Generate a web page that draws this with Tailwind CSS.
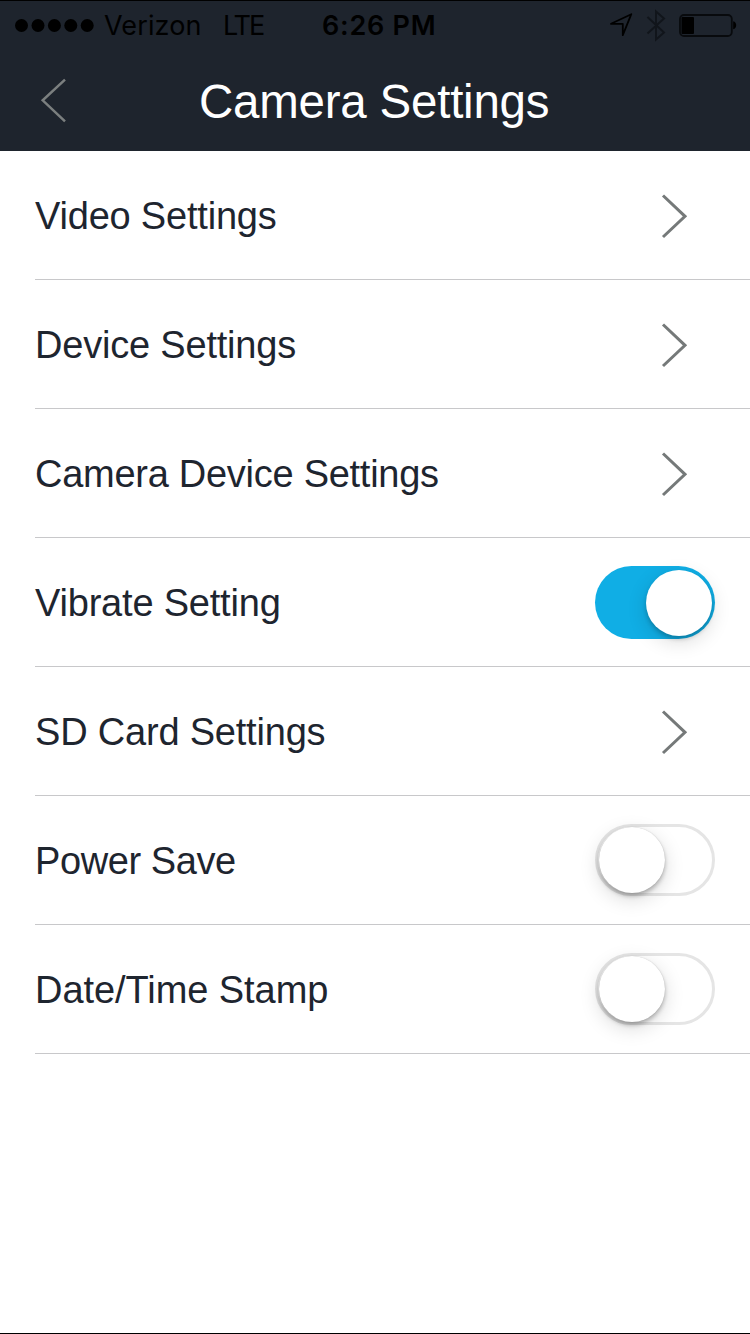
<!DOCTYPE html>
<html lang="en">
<head>
<meta charset="utf-8">
<title>Camera Settings</title>
<script src="https://cdn.jsdelivr.net/npm/@tailwindcss/browser@4"></script>
</head>
<body class="bg-white">
<div class="flex h-[1334px] w-[750px] flex-col overflow-hidden border-y border-black bg-white font-['Liberation_Sans',Arial,sans-serif] text-[#1e252f]">
  <header class="h-[150px] shrink-0 bg-[#1e242d]">
    <div class="flex h-[50px] items-center pl-[15px] font-[Inter,sans-serif] text-[27px] leading-[50px] text-black">
      <svg class="shrink-0" width="80" height="14" viewBox="0 0 80 14"><circle cx="6.5" cy="6.500" r="6.5"/><circle cx="23" cy="6.500" r="6.5"/><circle cx="39.4" cy="6.500" r="6.5"/><circle cx="55.8" cy="6.500" r="6.5"/><circle cx="72.2" cy="6.500" r="6.5"/></svg>
      <span class="ml-[9px] w-[119px] shrink-0 tracking-[0.1px]">Verizon</span>
      <span class="w-[99px] shrink-0 tracking-[-2.1px]">LTE</span>
      <span class="shrink-0 text-[27px] font-semibold tracking-[0.75px]">6:26 PM</span>
      <svg class="ml-auto mr-[11px] shrink-0" width="140" height="50" viewBox="0 1 140 50" fill="none">
        <path d="M32.300 14.200 12 23.800H23.800V35.200Z" stroke="#000" stroke-width="1.800" stroke-linejoin="round"/>
        <path d="M48.500 17 65 32.500 57 39.500V11.500L65 18.500 48.500 33.500" stroke="#11151b" stroke-width="2"/>
        <rect x="81" y="15" width="51.800" height="21" rx="4" stroke="#080a0d" stroke-width="1.800"/>
        <rect x="82.500" y="17" width="12.500" height="17" rx="1" fill="#000"/>
        <path d="M134.200 21.300c4 .8 4 7.200 0 8Z" fill="#000"/>
      </svg>
    </div>
    <div class="flex h-[100px] items-center pl-[39px]">
      <svg class="shrink-0" width="30" height="48" viewBox="0 0 30 48" fill="none" stroke="#7b7f7f" stroke-width="2.500"><path d="M26 2.700 3.700 23.300 26 44.300"/></svg>
      <h1 class="ml-[130px] pt-[2px] text-[47.5px] leading-[60px] tracking-[-0.23px] whitespace-nowrap text-white">Camera Settings</h1>
    </div>
  </header>
  <ul class="pl-[35px] text-[38px] leading-[44px] tracking-[-0.2px]">
    <li class="flex h-[129px] items-center justify-between border-b border-[#c8c8ca] pr-[61px]"><span class="pt-0.5">Video Settings</span><svg width="28" height="48" viewBox="0 0 28 48" fill="none" stroke="#757979" stroke-width="3"><path d="M2 4.500 24 25.300 2 46"/></svg></li>
    <li class="flex h-[129px] items-center justify-between border-b border-[#c8c8ca] pr-[61px]"><span class="pt-0.5">Device Settings</span><svg width="28" height="48" viewBox="0 0 28 48" fill="none" stroke="#757979" stroke-width="3"><path d="M2 4.500 24 25.300 2 46"/></svg></li>
    <li class="flex h-[129px] items-center justify-between border-b border-[#c8c8ca] pr-[61px]"><span class="pt-0.5 tracking-[-0.27px]">Camera Device Settings</span><svg width="28" height="48" viewBox="0 0 28 48" fill="none" stroke="#757979" stroke-width="3"><path d="M2 4.500 24 25.300 2 46"/></svg></li>
    <li class="flex h-[129px] items-center justify-between border-b border-[#c8c8ca] pr-[35px]"><span class="pt-0.5">Vibrate Setting</span>
      <div class="mt-px flex h-[73px] w-[120px] items-center justify-end rounded-full bg-[#10aee5] pr-[3.500px]"><div class="size-[66px] rounded-full bg-white shadow-[0_6px_20px_rgba(0,0,0,0.14),0_3px_4px_rgba(0,0,0,0.2)]"></div></div></li>
    <li class="flex h-[129px] items-center justify-between border-b border-[#c8c8ca] pr-[61px]"><span class="pt-0.5">SD Card Settings</span><svg width="28" height="48" viewBox="0 0 28 48" fill="none" stroke="#757979" stroke-width="3"><path d="M2 4.500 24 25.300 2 46"/></svg></li>
    <li class="flex h-[129px] items-center justify-between border-b border-[#c8c8ca] pr-[35px]"><span class="pt-0.5 tracking-[-0.42px]">Power Save</span>
      <div class="flex h-[72.500px] w-[120px] items-center rounded-full border-3 border-[#e5e5e5] bg-white"><div class="ml-[0.500px] size-[66px] rounded-full bg-white shadow-[0_6px_20px_rgba(0,0,0,0.15),0_3px_4px_rgba(0,0,0,0.25),0_0_1px_rgba(0,0,0,0.2)]"></div></div></li>
    <li class="flex h-[129px] items-center justify-between border-b border-[#c8c8ca] pr-[35px]"><span class="pt-0.5 tracking-[-0.06px]">Date/Time Stamp</span>
      <div class="flex h-[72.500px] w-[120px] items-center rounded-full border-3 border-[#e5e5e5] bg-white"><div class="ml-[0.500px] size-[66px] rounded-full bg-white shadow-[0_6px_20px_rgba(0,0,0,0.15),0_3px_4px_rgba(0,0,0,0.25),0_0_1px_rgba(0,0,0,0.2)]"></div></div></li>
  </ul>
</div>
</body>
</html>
